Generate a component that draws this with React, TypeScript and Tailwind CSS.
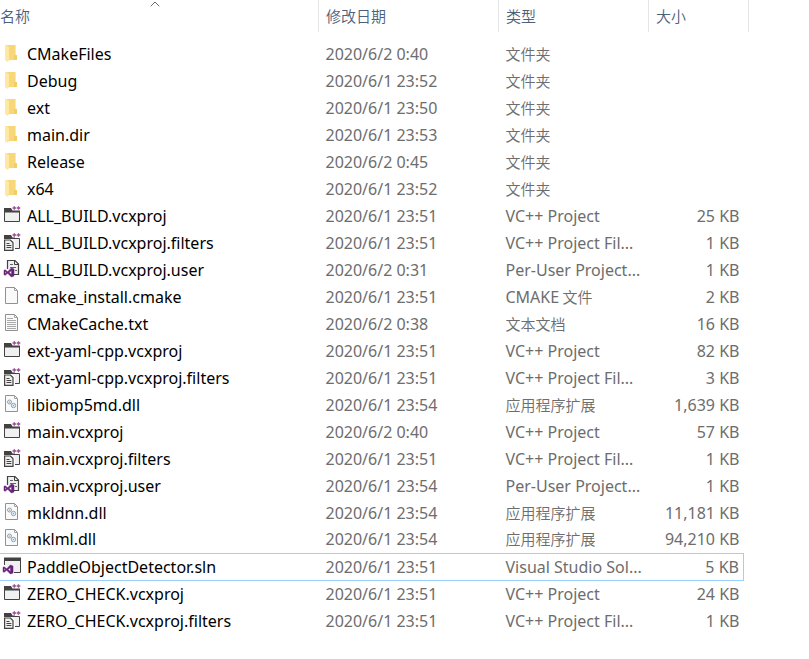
import { ChevronUp } from "lucide-react";

type Kind = "folder" | "project" | "filters" | "user" | "file" | "text" | "dll" | "sln";

interface Entry {
  name: string;
  date: string;
  kind: Kind;
  type: string;
  size?: string;
  selected?: boolean;
}

const ENTRIES: Entry[] = [
  { name: "CMakeFiles", date: "2020/6/2 0:40", kind: "folder", type: "文件夹" },
  { name: "Debug", date: "2020/6/1 23:52", kind: "folder", type: "文件夹" },
  { name: "ext", date: "2020/6/1 23:50", kind: "folder", type: "文件夹" },
  { name: "main.dir", date: "2020/6/1 23:53", kind: "folder", type: "文件夹" },
  { name: "Release", date: "2020/6/2 0:45", kind: "folder", type: "文件夹" },
  { name: "x64", date: "2020/6/1 23:52", kind: "folder", type: "文件夹" },
  { name: "ALL_BUILD.vcxproj", date: "2020/6/1 23:51", kind: "project", type: "VC++ Project", size: "25 KB" },
  { name: "ALL_BUILD.vcxproj.filters", date: "2020/6/1 23:51", kind: "filters", type: "VC++ Project Fil...", size: "1 KB" },
  { name: "ALL_BUILD.vcxproj.user", date: "2020/6/2 0:31", kind: "user", type: "Per-User Project...", size: "1 KB" },
  { name: "cmake_install.cmake", date: "2020/6/1 23:51", kind: "file", type: "CMAKE 文件", size: "2 KB" },
  { name: "CMakeCache.txt", date: "2020/6/2 0:38", kind: "text", type: "文本文档", size: "16 KB" },
  { name: "ext-yaml-cpp.vcxproj", date: "2020/6/1 23:51", kind: "project", type: "VC++ Project", size: "82 KB" },
  { name: "ext-yaml-cpp.vcxproj.filters", date: "2020/6/1 23:51", kind: "filters", type: "VC++ Project Fil...", size: "3 KB" },
  { name: "libiomp5md.dll", date: "2020/6/1 23:54", kind: "dll", type: "应用程序扩展", size: "1,639 KB" },
  { name: "main.vcxproj", date: "2020/6/2 0:40", kind: "project", type: "VC++ Project", size: "57 KB" },
  { name: "main.vcxproj.filters", date: "2020/6/1 23:51", kind: "filters", type: "VC++ Project Fil...", size: "1 KB" },
  { name: "main.vcxproj.user", date: "2020/6/1 23:54", kind: "user", type: "Per-User Project...", size: "1 KB" },
  { name: "mkldnn.dll", date: "2020/6/1 23:54", kind: "dll", type: "应用程序扩展", size: "11,181 KB" },
  { name: "mklml.dll", date: "2020/6/1 23:54", kind: "dll", type: "应用程序扩展", size: "94,210 KB" },
  { name: "PaddleObjectDetector.sln", date: "2020/6/1 23:51", kind: "sln", type: "Visual Studio Sol...", size: "5 KB", selected: true },
  { name: "ZERO_CHECK.vcxproj", date: "2020/6/1 23:51", kind: "project", type: "VC++ Project", size: "24 KB" },
  { name: "ZERO_CHECK.vcxproj.filters", date: "2020/6/1 23:51", kind: "filters", type: "VC++ Project Fil...", size: "1 KB" },
];

function PlusPlus() {
  return <path d="M10.5 4h3.6M12.3 2.2v3.6M14.7 4h3.6M16.5 2.2v3.6" stroke="#9b4f96" strokeWidth="1.4" />;
}

// Visual Studio ribbon, 10x9 with its origin at the top left
function Ribbon() {
  return (
    <path
      d="M0 2.3 1.1 1.8 3.7 3.8 7.4 0 10 1v7L7.4 9 3.7 5.3 1.1 7.3 0 6.8ZM1.2 3.3v2.5L2.5 4.5ZM5 4.5 7.5 6.5v-4Z"
      fill="#68217a"
      stroke="#68217a"
      strokeWidth=".5"
      fillRule="evenodd"
    />
  );
}

function Page() {
  return (
    <>
      <path d="M3.5 2.5h9l3 3v13h-12Z" fill="#fafafa" stroke="#919191" />
      <path d="M12.5 2.5v3h3" fill="none" stroke="#a3a3a3" />
    </>
  );
}

function FileIcon({ kind }: { kind: Kind }) {
  return (
    <svg viewBox="0 0 20 20" className="mt-px ml-0.5 h-5 w-5 shrink-0" aria-hidden="true">
      {kind === "folder" && (
        <>
          <path d="M4 3h9.6v10H15v5H4Z" fill="#f7d778" />
          <path d="M12 13h3v5h-3Z" fill="#f2ce68" />
          <path d="M3 3h1.5L7 5v13.5L5.5 20 3 18Z" fill="#ffe8a2" />
        </>
      )}
      {kind === "project" && (
        <>
          <path d="M2.5 7.5h15v10h-15Z" fill="#f0eff1" stroke="#424242" />
          <path d="M2 4h7l1.5 2.5H18v2H2Z" fill="#424242" />
          <PlusPlus />
        </>
      )}
      {kind === "filters" && (
        <>
          <path d="M9 7.5h8.5v10H13" fill="#f0eff1" stroke="#424242" />
          <path d="M2 4h7l1.5 2.5H13v1.5H2Z" fill="#424242" />
          <path d="M1 8h9l3 3v9H1Z" fill="#fff" />
          <path d="M2.6 9h5.8l2.6 2.6v7.8H2.6Z" fill="#f0eff1" stroke="#424242" strokeWidth="1.2" />
          <path d="M4.5 12.5h3M4.5 14.5h4.8M4.5 16.5h4.8" stroke="#424242" />
          <PlusPlus />
        </>
      )}
      {kind === "user" && (
        <>
          <path d="M5.5 11V2.5h7.5l3.5 3.5v10.5H12" fill="#f0eff1" stroke="#424242" strokeWidth="1.2" />
          <path d="M12.5 2.5v4h4" fill="none" stroke="#424242" />
          <path d="M8 6.5h3M8 9.5h6M13 12.5h2" stroke="#656565" />
          <g transform="translate(2 10)">
            <Ribbon />
          </g>
        </>
      )}
      {kind === "file" && <Page />}
      {kind === "text" && (
        <>
          <Page />
          <path d="M5 6.5h6M5 8.5h9M5 10.5h9M5 12.5h9M5 14.5h9M5 16.5h9" stroke="#aaa" />
        </>
      )}
      {kind === "dll" && (
        <>
          <Page />
          <circle cx="7.5" cy="9" r="2" fill="#eef2f5" stroke="#93a1ab" />
          <circle cx="11.5" cy="12.5" r="2.2" fill="#e3f0f9" stroke="#85a5bb" />
          <circle cx="7.5" cy="9" r=".6" fill="#7c8c98" />
          <circle cx="11.5" cy="12.5" r=".6" fill="#7192a8" />
        </>
      )}
      {kind === "sln" && (
        <>
          <path d="M2.5 10V3.5h16v14H12" fill="#f0eff1" stroke="#424242" />
          <path d="M2 2.5h17v3.5H2Z" fill="#424242" />
          <g transform="translate(1 10)">
            <Ribbon />
          </g>
        </>
      )}
    </svg>
  );
}

function TypeLabel({ text }: { text: string }) {
  // Han runs are set one size below the Latin ones
  return text.split(" ").map((word, i) => (
    <span key={i} className={/[\u4e00-\u9fff]/.test(word) ? "font-['Noto_Sans_CJK_SC',sans-serif] text-[15px] font-[350]" : ""}>
      {i > 0 && " "}
      {word}
    </span>
  ));
}

function Row({ entry }: { entry: Entry }) {
  const edge = entry.selected ? "border-y border-[#99d1ff]" : "";

  return (
    <tr className="h-[27px] text-[#6d6d6d]">
      <td className={`p-0 ${edge}`}>
        <a href="#" className="flex h-[26px] items-start gap-[5px] text-black">
          <FileIcon kind={entry.kind} />
          {entry.name}
        </a>
      </td>
      <td className={`p-0 pl-[7px] ${edge}`}>{entry.date}</td>
      <td className={`p-0 pl-[7px] ${edge}`}>
        <TypeLabel text={entry.type} />
      </td>
      <td className={`p-0 pr-1 text-right ${edge} ${entry.selected ? "border-r" : ""}`}>{entry.size}</td>
      <td className="p-0" />
    </tr>
  );
}

export default function App() {
  return (
    <main className="min-h-screen bg-white pr-[60px] font-['Noto_Sans','Noto_Sans_CJK_SC',sans-serif] text-base leading-[26px] whitespace-nowrap">
      <table className="w-full table-fixed border-collapse">
        <colgroup>
          <col />
          <col className="w-[180px]" />
          <col className="w-[150px]" />
          <col className="w-[95px]" />
          <col className="w-[5px]" />
        </colgroup>
        <thead className="text-left text-[15px] leading-[26px] text-[#4c607a]">
          <tr className="h-8">
            <th className="relative border-r border-[#e5e5e5] p-0 font-[350]">
              名称
              <ChevronUp
                className="absolute -top-1 left-1/2 -ml-3 h-4 w-4 text-[#6d6d6d]"
                strokeWidth={1.5}
                aria-hidden="true"
              />
            </th>
            <th className="border-r border-[#e5e5e5] p-0 pl-[7px] font-[350]">修改日期</th>
            <th className="border-r border-[#e5e5e5] p-0 pl-[7px] font-[350]">类型</th>
            <th colSpan={2} className="border-r border-[#e5e5e5] p-0 pl-[7px] font-[350]">
              大小
            </th>
          </tr>
        </thead>
        <tbody>
          <tr className="h-2" aria-hidden="true">
            <td colSpan={5} className="p-0 leading-none" />
          </tr>
          {ENTRIES.map((entry) => (
            <Row key={entry.name} entry={entry} />
          ))}
        </tbody>
      </table>
    </main>
  );
}
